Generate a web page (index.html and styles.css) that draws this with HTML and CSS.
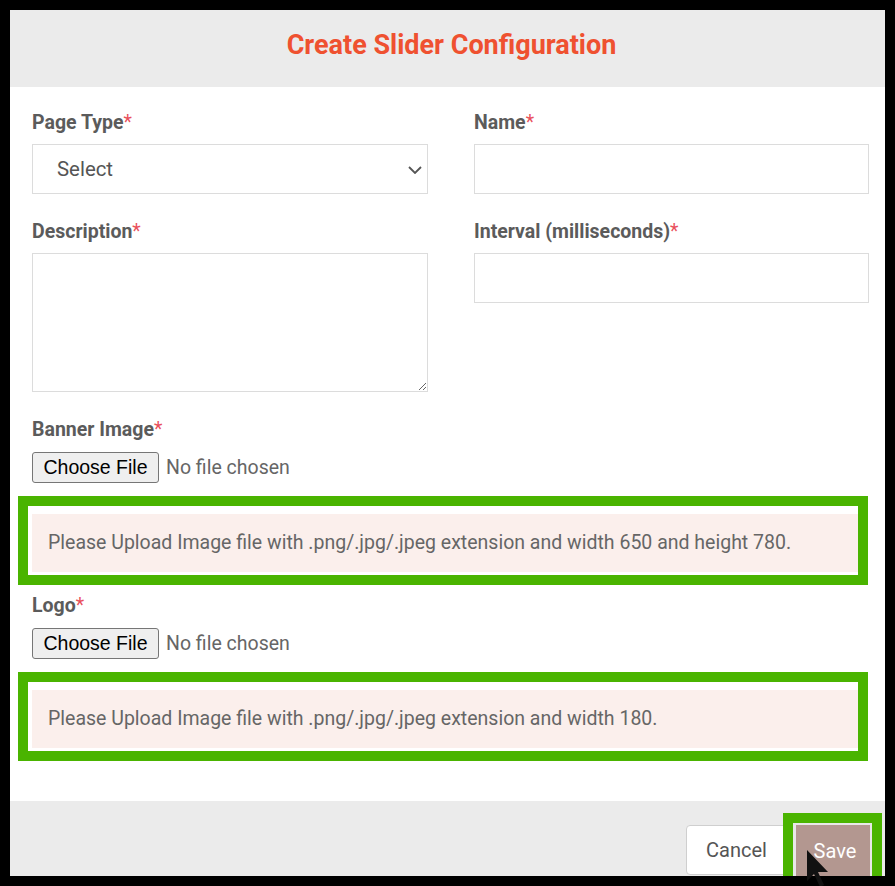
FILE: index.html
```html
<!DOCTYPE html>
<html lang="en">
<head>
<meta charset="utf-8">
<title>Create Slider Configuration</title>
<link rel="stylesheet" href="styles.css">
</head>
<body>
<div class="dialog">
  <div class="dialog-header">
    <h1 class="dialog-title">Create Slider Configuration</h1>
  </div>
  <form class="dialog-body">
    <div class="grid">
      <div class="field">
        <label class="label">Page Type<span class="req">*</span></label>
        <div class="select-wrap">
          <select class="control select"><option>Select</option></select>
          <svg class="chevron" width="14" height="8" viewBox="0 0 14 8"><path d="M1 1 L7 7 L13 1" fill="none" stroke="#555" stroke-width="1.8"/></svg>
        </div>
      </div>
      <div class="field">
        <label class="label">Name<span class="req">*</span></label>
        <input class="control" type="text">
      </div>
      <div class="field">
        <label class="label">Description<span class="req">*</span></label>
        <textarea class="control textarea"></textarea>
      </div>
      <div class="field">
        <label class="label">Interval (milliseconds)<span class="req">*</span></label>
        <input class="control" type="text">
      </div>
    </div>

    <div class="upload">
      <label class="label">Banner Image<span class="req">*</span></label>
      <div class="file-row">
        <span class="file-btn">Choose File</span>
        <span class="file-name">No file chosen</span>
      </div>
    </div>
    <div class="highlight">
      <div class="alert">Please Upload Image file with .png/.jpg/.jpeg extension and width 650 and height 780.</div>
    </div>

    <div class="upload upload-logo">
      <label class="label">Logo<span class="req">*</span></label>
      <div class="file-row">
        <span class="file-btn">Choose File</span>
        <span class="file-name">No file chosen</span>
      </div>
    </div>
    <div class="highlight">
      <div class="alert">Please Upload Image file with .png/.jpg/.jpeg extension and width 180.</div>
    </div>
  </form>
  <div class="dialog-footer">
    <button class="btn btn-cancel" type="button">Cancel</button>
    <div class="save-highlight">
      <button class="btn btn-save" type="button">Save</button>
    </div>
  </div>
</div>
<svg class="cursor" width="26" height="40" viewBox="0 0 26 40"><polygon points="0,0 0,31 7,24 13,37 17,35 11,22 21,22" fill="#111"/></svg>
</body>
</html>
```
FILE: styles.css
```css
html, body {
  margin: 0;
  padding: 0;
}
body {
  background: #000;
  width: 895px;
  height: 886px;
  overflow: hidden;
  position: relative;
  font-family: Roboto, "Liberation Sans", Arial, sans-serif;
}
.dialog {
  margin: 10px 0 0 10px;
  width: 875px;
  height: 866px;
  background: #fff;
  overflow: hidden;
  display: flex;
  flex-direction: column;
}
.dialog-header {
  height: 77px;
  background: #ebebeb;
  display: flex;
  align-items: center;
  justify-content: center;
  flex-shrink: 0;
}
.dialog-title {
  margin: 0 0 8px 8px;
  font-size: 27px;
  font-weight: 700;
  color: #ef5130;
  line-height: 32px;
}
.dialog-body {
  padding: 24px 16px 0 22px;
  height: 714px;
  box-sizing: border-box;
  flex-shrink: 0;
}
.grid {
  display: grid;
  grid-template-columns: 396px 395px;
  column-gap: 46px;
  row-gap: 26px;
}
.label {
  display: block;
  font-size: 19.5px;
  line-height: 23px;
  font-weight: 700;
  color: #5b5b5b;
  margin-bottom: 10px;
}
.req {
  color: #e9505c;
  font-weight: 400;
}
.control {
  display: block;
  box-sizing: border-box;
  width: 100%;
  height: 50px;
  border: 1px solid #dcdcdc;
  border-radius: 0;
  background: #fff;
  margin: 0;
  font-family: Roboto, sans-serif;
  font-size: 20.4px;
  color: #555;
  outline: none;
}
.select-wrap {
  position: relative;
}
.select {
  appearance: none;
  -webkit-appearance: none;
  padding: 0 24px;
}
.chevron {
  position: absolute;
  right: 6px;
  top: 22px;
}
.textarea {
  height: 139px;
  resize: both;
}
.upload {
  margin-top: 26px;
}
.upload-logo {
  margin-top: 9px;
}
.upload .label {
  margin-bottom: 11px;
}
.file-row {
  display: flex;
  align-items: center;
  gap: 7px;
}
.file-btn {
  box-sizing: border-box;
  width: 127px;
  height: 31px;
  border: 1px solid #767676;
  border-radius: 3px;
  background: #efefef;
  font-family: "Liberation Sans", Arial, sans-serif;
  font-size: 19.5px;
  color: #000;
  display: flex;
  align-items: center;
  justify-content: center;
}
.file-name {
  font-size: 19.5px;
  color: #666;
}
.highlight {
  margin: 13px 1px 0 -14px;
  border: 10px solid #4ab400;
  padding: 8px 0 3px 4px;
  background: #fff;
}
.alert {
  height: 58px;
  background: #fbefec;
  display: flex;
  align-items: center;
  padding: 0 16px 2px;
  box-sizing: border-box;
  font-size: 19.5px;
  color: #666;
}
.dialog-footer {
  flex: 1;
  background: #ebebeb;
  display: flex;
  justify-content: flex-end;
  align-items: flex-start;
  padding: 12px 3px 0 0;
}
.btn {
  font-family: Roboto, sans-serif;
  font-size: 20px;
  border-radius: 4px;
  cursor: pointer;
}
.btn-cancel {
  margin-top: 12px;
  width: 109px;
  height: 50px;
  padding: 0 0 0 19px;
  text-align: left;
  border: 1px solid #cfcfcf;
  background: #fff;
  color: #555;
}
.save-highlight {
  margin-left: -12px;
  border: 10px solid #4ab400;
  border-bottom: 0;
  padding: 2px 2px 0 3px;
  background: #e8e8e8;
  height: 70px;
}
.btn-save {
  display: block;
  width: 74px;
  height: 52px;
  border: 0;
  border-radius: 0;
  background: #b39790;
  color: #fff;
  padding: 0 0 0 4px;
}
.cursor {
  position: absolute;
  left: 807px;
  top: 850px;
}
```
